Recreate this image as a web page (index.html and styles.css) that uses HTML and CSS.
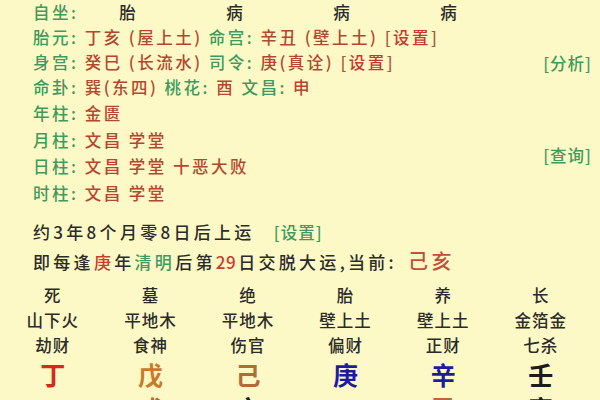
FILE: index.html
```html
<!DOCTYPE html>
<html lang="zh-CN">
<head>
<meta charset="utf-8">
<title>命盘</title>
<link rel="stylesheet" href="styles.css">
</head>
<body>
<div class="page">
  <div class="top">
    <div class="info">
      <div class="row zuo">
        <span class="lab">自坐:</span>
        <span class="cell">胎</span>
        <span class="cell">病</span>
        <span class="cell">病</span>
        <span class="cell">病</span>
      </div>
      <div class="row"><span class="lab">胎元:</span> <span class="val">丁亥 (屋上土)</span> <span class="lab">命宫:</span> <span class="val">辛丑 (壁上土)</span> <span class="set">[<b>设置</b>]</span></div>
      <div class="row"><span class="lab">身宫:</span> <span class="val">癸巳 (长流水)</span> <span class="lab">司令:</span> <span class="val">庚(真诠)</span> <span class="set">[<b>设置</b>]</span></div>
      <div class="row"><span class="lab">命卦:</span> <span class="val">巽(东四)</span> <span class="lab">桃花:</span> <span class="val">酉</span> <span class="lab">文昌:</span> <span class="val">申</span></div>
      <div class="row r2"><span class="lab">年柱:</span> <span class="val">金匮</span></div>
      <div class="row r2"><span class="lab">月柱:</span> <span class="val">文昌 学堂</span></div>
      <div class="row r2"><span class="lab">日柱:</span> <span class="val">文昌 学堂 十恶大败</span></div>
      <div class="row r2"><span class="lab">时柱:</span> <span class="val">文昌 学堂</span></div>
    </div>
    <div class="links">
      <span class="link l1">[分析]</span>
      <span class="link l2">[查询]</span>
    </div>
  </div>
  <div class="yun">
    <div class="line1">约3年8个月零8日后上运 <span class="gset">[设置]</span></div>
    <div class="line2">即每逢<span class="red">庚</span>年<span class="green">清明</span>后第<span class="red num">29</span>日交脱大运,当前: <span class="cur">己亥</span></div>
  </div>
  <div class="table">
    <span>死</span><span>墓</span><span>绝</span><span>胎</span><span>养</span><span>长</span>
    <span>山下火</span><span>平地木</span><span>平地木</span><span>壁上土</span><span>壁上土</span><span>金箔金</span>
    <span>劫财</span><span>食神</span><span>伤官</span><span>偏财</span><span>正财</span><span>七杀</span>
    <span class="big c-red">丁</span><span class="big c-orange">戊</span><span class="big c-brown">己</span><span class="big c-blue">庚</span><span class="big c-blue">辛</span><span class="big c-black">壬</span>
    <span class="big c-light">酉</span><span class="big c-brown">戌</span><span class="big c-black">亥</span><span class="big c-light">子</span><span class="big c-brown">丑</span><span class="big c-black">寅</span>
  </div>
</div>
</body>
</html>
```
FILE: styles.css
```css
html, body {
  margin: 0;
  padding: 0;
  background: #fdf9c6;
  overflow: hidden;
}
.page {
  width: 600px;
  height: 400px;
  overflow: hidden;
  font-family: "Noto Sans CJK SC", "Noto Sans", sans-serif;
  font-size: 16.5px;
  font-weight: 500;
  color: #2b2b2b;
}
.top {
  display: grid;
  grid-template-columns: 1fr auto;
  padding-left: 33px;
  padding-right: 8px;
}
.info {
  display: flex;
  flex-direction: column;
}
.row {
  height: 25px;
  line-height: 25px;
  white-space: nowrap;
  letter-spacing: 2.5px;
}
.row.r2 {
  height: 26.5px;
  line-height: 26.5px;
}
.zuo {
  display: flex;
}
.zuo .lab {
  width: 41px;
}
.zuo .cell {
  width: 107px;
  text-align: center;
  color: #2b2b2b;
  letter-spacing: 0;
}
.lab {
  color: #3f9a5d;
}
.val {
  color: #b4472f;
}
.set {
  color: #a9563e;
}
.set b {
  font-weight: 500;
  color: #c8362e;
}
.links {
  display: flex;
  flex-direction: column;
  align-items: flex-end;
  padding-top: 51px;
}
.link {
  color: #3f9a5d;
  line-height: 25px;
  letter-spacing: 1px;
}
.l2 {
  margin-top: 67px;
}
.yun {
  padding-left: 33px;
  padding-top: 12px;
  font-size: 17px;
  letter-spacing: 3.3px;
  white-space: nowrap;
}
.line1 {
  line-height: 28px;
}
.gset {
  margin-left: 12px;
  color: #3f9a5d;
  font-size: 16.5px;
  letter-spacing: 1px;
}
.line2 {
  line-height: 30px;
}
.red {
  color: #cf3a2c;
}
.green {
  color: #3f9a5d;
}
.num {
  letter-spacing: 0.5px;
  margin-right: 2px;
}
.cur {
  font-size: 20px;
  color: #c1503a;
  margin-left: 4px;
}
.table {
  display: grid;
  grid-template-columns: repeat(6, 97.6px);
  grid-template-rows: 25px 25px 25px 34px 32px;
  padding-left: 4px;
  padding-top: 6px;
  line-height: 25px;
  text-align: center;
  letter-spacing: 1px;
}
.table .big {
  font-size: 25px;
  font-weight: bold;
  line-height: 32px;
  letter-spacing: 0;
}
.table .big.c-light,
.table span:nth-child(n+31) {
  line-height: 34px;
}
.c-red { color: #d42a1c; }
.c-orange { color: #c97a2a; }
.c-brown { color: #b36a34; }
.c-blue { color: #1c1c9c; }
.c-black { color: #1c1c1c; }
.c-light { color: #f2f0e6; }
```
